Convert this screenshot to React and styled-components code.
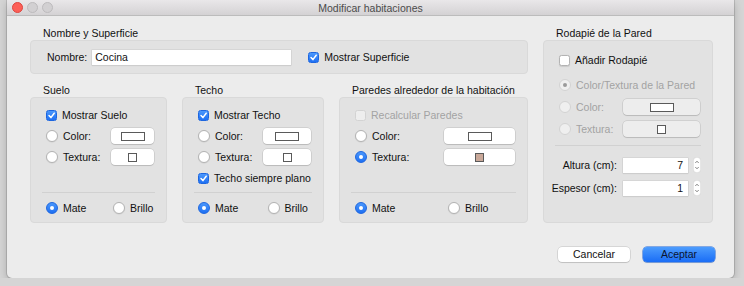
import React from 'react';
import styled, { createGlobalStyle } from 'styled-components';

const Global = createGlobalStyle`
  html, body { margin: 0; padding: 0; }
  body {
    background: #d5d5d5;
    font-family: "Liberation Sans", Arial, sans-serif;
    font-size: 10.5px;
    color: #111;
  }
  * { box-sizing: border-box; }
`;

const Window = styled.div`
  margin-left: 7px;
  width: 727px;
  height: 278px;
  background: #ececec;
  border-radius: 0 0 5px 5px;
  box-shadow: 0 0 0 1px rgba(0,0,0,0.12), 0 3px 8px rgba(0,0,0,0.22);
  display: flex;
  flex-direction: column;
  overflow: hidden;
`;

const TitleBar = styled.div`
  height: 16px;
  flex: none;
  display: grid;
  grid-template-columns: 1fr auto 1fr;
  align-items: center;
  background: linear-gradient(#e9e7e9, #d4d2d4);
  border-bottom: 1px solid #bcbcbc;
`;

const Lights = styled.div`
  display: flex;
  gap: 4px;
  padding-left: 5px;
`;

const Light = styled.span`
  width: 11px;
  height: 11px;
  border-radius: 50%;
  background: ${p => (p.$red ? '#fc5f57' : '#d2d0d2')};
  border: 0.5px solid ${p => (p.$red ? '#de453f' : '#bdbbbd')};
`;

const WinTitle = styled.div`
  color: #4b4b4b;
  font-size: 10.5px;
  line-height: 14px;
`;

const Content = styled.div`
  flex: 1;
  display: flex;
  flex-direction: column;
  padding: 11px 21px 0 23px;
`;

const Main = styled.div`
  display: grid;
  grid-template-columns: 498px 170px;
  column-gap: 15px;
`;

const LeftCol = styled.div`
  display: flex;
  flex-direction: column;
  gap: 10px;
`;

const Section = styled.div`
  display: flex;
  flex-direction: column;
`;

const SectionTitle = styled.div`
  padding-left: 13px;
  height: 13px;
  line-height: 13px;
  white-space: nowrap;
`;

const Box = styled.div`
  background: #e2e2e2;
  border: 1px solid #d9d9d9;
  border-radius: 4px;
`;

const NameBox = styled(Box)`
  height: 34px;
  display: flex;
  align-items: center;
  padding-left: 16px;
  gap: 17px;
`;

const NameField = styled.span`
  display: inline-flex;
  align-items: center;
  gap: 5px;
`;

const TextField = styled.div`
  width: ${p => p.$w}px;
  height: 15px;
  background: #fff;
  box-shadow: 0 0 0 0.5px #c9c9c9, 0 1px 1px rgba(0,0,0,0.08);
  padding: 0 ${p => (p.$right ? 5 : 3)}px;
  line-height: 15px;
  text-align: ${p => (p.$right ? 'right' : 'left')};
`;

const Panels = styled.div`
  display: grid;
  grid-template-columns: 137px 142px 189px;
  column-gap: 15px;
`;

const PanelBox = styled(Box)`
  height: 126px;
  display: flex;
  flex-direction: column;
  gap: 5px;
  padding: 9px 12px 6px 15px;
`;

const Row = styled.div`
  height: 16px;
  flex: none;
  display: flex;
  align-items: center;
  justify-content: space-between;
  margin-bottom: ${p => p.$mb || 0}px;
`;

const Choice = styled.span`
  display: inline-flex;
  align-items: center;
  gap: 5px;
  white-space: nowrap;
  color: ${p => (p.$disabled ? '#a3a3a3' : 'inherit')};
`;

const CheckBoxBox = styled.span`
  width: 11px;
  height: 11px;
  border-radius: 2.5px;
  display: inline-flex;
  align-items: center;
  justify-content: center;
  background: ${p => (p.$checked ? 'linear-gradient(#4a97fb, #1f70f3)' : p.$disabled ? '#eeeeee' : '#fff')};
  border: 0.5px solid ${p => (p.$checked ? '#1d66e0' : p.$disabled ? '#d3d3d3' : '#b3b3b3')};
  box-shadow: ${p => (p.$checked || p.$disabled ? 'none' : '0 0.5px 1px rgba(0,0,0,0.1)')};
`;

const RadioDot = styled.span`
  width: 12px;
  height: 12px;
  border-radius: 50%;
  display: inline-flex;
  align-items: center;
  justify-content: center;
  background: ${p => (p.$checked ? 'linear-gradient(#4a97fb, #1f70f3)' : p.$disabled ? '#efefef' : '#fff')};
  border: 0.5px solid ${p => (p.$checked ? '#1d66e0' : p.$disabled ? '#d3d3d3' : '#b3b3b3')};
  box-shadow: ${p => (p.$checked || p.$disabled ? 'none' : '0 0.5px 1px rgba(0,0,0,0.1)')};
  &::after {
    content: '';
    display: ${p => (p.$checked || p.$mark ? 'block' : 'none')};
    width: 4px;
    height: 4px;
    border-radius: 50%;
    background: ${p => (p.$checked ? '#fff' : '#9a9a9a')};
  }
`;

const Well = styled.div`
  width: ${p => p.$w}px;
  height: 16px;
  border-radius: 4px;
  display: flex;
  align-items: center;
  justify-content: center;
  background: ${p => (p.$disabled ? '#ededed' : '#fff')};
  box-shadow: 0 0 0 0.5px rgba(0,0,0,0.16), 0 1px 1px rgba(0,0,0,0.1);
`;

const Swatch = styled.span`
  width: ${p => (p.$square ? 9 : 24)}px;
  height: 9px;
  background: ${p => p.$fill || '#fff'};
  border: 1px solid #5a5a5a;
`;

const Separator = styled.div`
  height: 1px;
  flex: none;
  background: #d1d1d1;
  margin: ${p => (p.$auto ? 'auto' : `${p.$mt || 0}px`)} -1px 0 -4px;
`;

const FinishRow = styled.div`
  height: 16px;
  flex: none;
  margin-top: 2px;
  display: grid;
  grid-template-columns: 1fr 1fr;
  align-items: center;
  & > *:last-child { padding-left: 13px; }
`;

const RightBox = styled(Box)`
  flex: 1;
  display: flex;
  flex-direction: column;
  gap: 6px;
  padding: 11px 12px 0 15px;
`;

const NumRow = styled.div`
  height: 15px;
  display: grid;
  grid-template-columns: minmax(0, 1fr) 65px 8px;
  column-gap: 5px;
  align-items: center;
  margin-top: ${p => p.$mt || 0}px;
  margin-right: -1px;
`;

const NumLabel = styled.span`
  display: flex;
  justify-content: flex-end;
  white-space: nowrap;
  padding-right: 1px;
  overflow: visible;
`;

const Footer = styled.div`
  display: flex;
  justify-content: flex-end;
  gap: 13px;
  margin-top: 24px;
  margin-right: -2px;
`;

const Button = styled.button`
  width: 72px;
  height: 15px;
  padding: 0;
  border: none;
  border-radius: 4px;
  font: inherit;
  line-height: 15px;
  color: ${p => (p.$primary ? '#0b1530' : '#111')};
  background: ${p => (p.$primary ? 'linear-gradient(#4c9cfd, #1a6df6)' : '#fff')};
  box-shadow: ${p => (p.$primary
    ? '0 0 0 0.5px #1b62d8, 0 1px 1px rgba(0,0,0,0.12)'
    : '0 0 0 0.5px rgba(0,0,0,0.18), 0 1px 1px rgba(0,0,0,0.1)')};
`;

const Check = ({ checked, disabled, children }) => (
  <Choice $disabled={disabled}>
    <CheckBoxBox $checked={checked} $disabled={disabled}>
      {checked && (
        <svg width="9" height="9" viewBox="0 0 9 9">
          <path d="M2 4.6 L3.9 6.6 L7.2 2.2" fill="none" stroke="#fff" strokeWidth="1.5" strokeLinecap="round" strokeLinejoin="round" />
        </svg>
      )}
    </CheckBoxBox>
    {children}
  </Choice>
);

const Radio = ({ checked, disabled, mark, children }) => (
  <Choice $disabled={disabled}>
    <RadioDot $checked={checked} $disabled={disabled} $mark={mark} />
    {children}
  </Choice>
);

const Spinner = () => (
  <svg width="8" height="16" viewBox="0 0 8 16">
    <rect x="0.25" y="0.25" width="7.5" height="15.5" rx="3.5" fill="#fff" stroke="#c8c8c8" strokeWidth="0.5" />
    <path d="M2.3 6 L4 4.2 L5.7 6" fill="none" stroke="#6a6a6a" strokeWidth="0.8" />
    <path d="M2.3 10 L4 11.8 L5.7 10" fill="none" stroke="#6a6a6a" strokeWidth="0.8" />
  </svg>
);

const SurfacePanel = ({ title, showLabel, well, mateChecked = true, extra }) => (
  <Section>
    <SectionTitle>{title}</SectionTitle>
    <PanelBox>
      {showLabel}
      <Row>
        <Radio checked={well.colorChecked}>Color:</Radio>
        <Well $w={well.w}><Swatch /></Well>
      </Row>
      <Row>
        <Radio checked={well.texChecked}>Textura:</Radio>
        <Well $w={well.w}><Swatch $square $fill={well.texFill} /></Well>
      </Row>
      {extra}
      <Separator $auto />
      <FinishRow>
        <Radio checked={mateChecked}>Mate</Radio>
        <Radio>Brillo</Radio>
      </FinishRow>
    </PanelBox>
  </Section>
);

export default function App() {
  return (
    <>
      <Global />
      <Window>
        <TitleBar>
          <Lights>
            <Light $red />
            <Light />
            <Light />
          </Lights>
          <WinTitle>Modificar habitaciones</WinTitle>
          <span />
        </TitleBar>
        <Content>
          <Main>
            <LeftCol>
              <Section>
                <SectionTitle>Nombre y Superficie</SectionTitle>
                <NameBox>
                  <NameField>
                    Nombre:
                    <TextField $w={199}>Cocina</TextField>
                  </NameField>
                  <Check checked>Mostrar Superficie</Check>
                </NameBox>
              </Section>
              <Panels>
                <SurfacePanel
                  title="Suelo"
                  showLabel={<Row><Check checked>Mostrar Suelo</Check></Row>}
                  well={{ w: 43 }}
                />
                <SurfacePanel
                  title="Techo"
                  showLabel={<Row><Check checked>Mostrar Techo</Check></Row>}
                  well={{ w: 48 }}
                  extra={<Row><Check checked>Techo siempre plano</Check></Row>}
                />
                <SurfacePanel
                  title="Paredes alrededor de la habitación"
                  showLabel={<Row><Check disabled>Recalcular Paredes</Check></Row>}
                  well={{ w: 71, texChecked: true, texFill: '#c9a899' }}
                />
              </Panels>
            </LeftCol>
            <Section>
              <SectionTitle>Rodapié de la Pared</SectionTitle>
              <RightBox>
                <Row $mb={3}><Check>Añadir Rodapié</Check></Row>
                <Row><Radio disabled mark>Color/Textura de la Pared</Radio></Row>
                <Row>
                  <Radio disabled>Color:</Radio>
                  <Well $w={77} $disabled><Swatch /></Well>
                </Row>
                <Row>
                  <Radio disabled>Textura:</Radio>
                  <Well $w={77} $disabled><Swatch $square /></Well>
                </Row>
                <Separator $mt={2} />
                <NumRow $mt={5}>
                  <NumLabel>Altura (cm):</NumLabel>
                  <TextField $w={65} $right>7</TextField>
                  <Spinner />
                </NumRow>
                <NumRow $mt={2}>
                  <NumLabel>Espesor (cm):</NumLabel>
                  <TextField $w={65} $right>1</TextField>
                  <Spinner />
                </NumRow>
              </RightBox>
            </Section>
          </Main>
          <Footer>
            <Button>Cancelar</Button>
            <Button $primary>Aceptar</Button>
          </Footer>
        </Content>
      </Window>
    </>
  );
}
